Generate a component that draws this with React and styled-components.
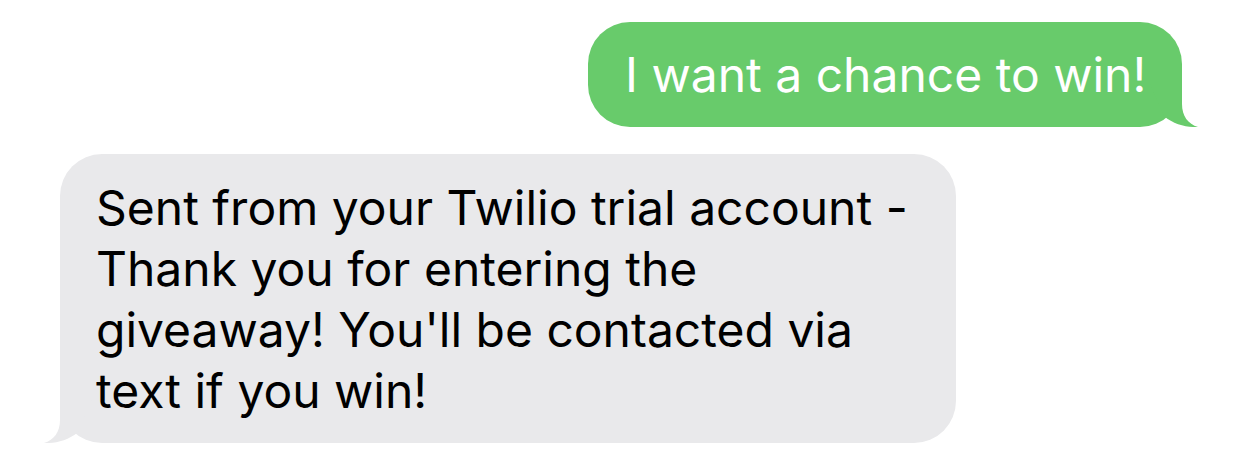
import React from "react";
import styled, { createGlobalStyle } from "styled-components";

const Global = createGlobalStyle`
  html, body { margin: 0; padding: 0; background: #ffffff; }
  body { font-family: Inter, "Noto Sans", "Liberation Sans", sans-serif; }
`;

const GREEN = "#68cb6b";
const GRAY = "#e9e9eb";

const Thread = styled.div`
  width: 1242px;
  height: 469px;
  box-sizing: border-box;
  padding: 22px 60px 0 60px;
  display: flex;
  flex-direction: column;
  gap: 27px;
  overflow: hidden;
`;

const Row = styled.div`
  display: flex;
  justify-content: ${(p) => (p.$sent ? "flex-end" : "flex-start")};
`;

const Bubble = styled.div`
  position: relative;
  box-sizing: border-box;
  font-size: 48px;
  line-height: 61px;
  border-radius: 42px;
  color: ${(p) => (p.$sent ? "#ffffff" : "#000000")};
  background: ${(p) => (p.$sent ? GREEN : GRAY)};
  width: ${(p) => p.$w}px;
  padding: ${(p) => (p.$sent ? "22px 0 22px 37px" : "23px 0 22px 36px")};
`;

const Text = styled.div`
  position: relative;
  z-index: 1;
  white-space: pre-line;
  font-weight: 400;
`;

const TailSvg = styled.svg`
  position: absolute;
  bottom: 0;
  width: 50px;
  height: 43px;
  ${(p) =>
    p.$sent
      ? "right: -18px;"
      : "left: -18px; transform: scaleX(-1);"}
`;

function Tail({ sent, color }) {
  return (
    <TailSvg $sent={sent} viewBox="0 0 50 43" aria-hidden="true">
      <path
        d="M32 0 L32 20 C32 32 38 40 48 43 C38 43.5 24 41 14 32 L0 0 Z"
        fill={color}
      />
    </TailSvg>
  );
}

export default function App() {
  return (
    <>
      <Global />
      <Thread>
        <Row $sent>
          <Bubble $sent $w={594}>
            <Text>I want a chance to win!</Text>
            <Tail sent color={GREEN} />
          </Bubble>
        </Row>
        <Row>
          <Bubble $w={896}>
            <Text>
              {"Sent from your Twilio trial account -\nThank you for entering the\ngiveaway! You'll be contacted via\ntext if you win!"}
            </Text>
            <Tail color={GRAY} />
          </Bubble>
        </Row>
      </Thread>
    </>
  );
}
